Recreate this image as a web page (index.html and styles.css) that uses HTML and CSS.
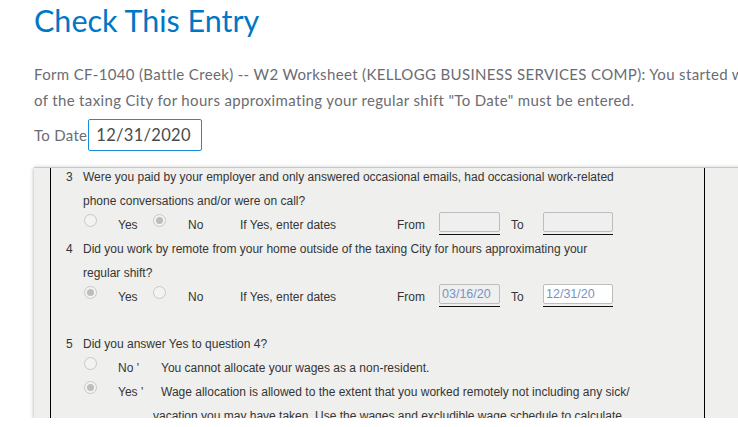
FILE: index.html
```html
<!DOCTYPE html>
<html>
<head>
    <title>Check This Entry</title>
    <link rel="stylesheet" href="styles.css">
</head>
<body>
    <h1 class="title">Check This Entry</h1>

    <p class="message">
        <span class="msg-line">Form CF-1040 (Battle Creek) -- W2 Worksheet (KELLOGG BUSINESS SERVICES COMP): You started working remotely from your home outside</span>
        <span class="msg-line">of the taxing City for hours approximating your regular shift "To Date" must be entered.</span>
    </p>

    <div class="to-date">
        <label for="toDate">To Date</label>
        <input type="text" id="toDate" class="date-input" value="12/31/2020">
    </div>

    <div class="viewer">
        <div class="sheet">
            <div class="q-line"><span class="q-num">3</span>Were you paid by your employer and only answered occasional emails, had occasional work-related</div>
            <div class="q-line q-cont">phone conversations and/or were on call?</div>
            <div class="answer-row">
                <span class="choice"><span class="radio"></span><span class="choice-label">Yes</span></span>
                <span class="choice choice-no"><span class="radio checked"></span><span class="choice-label">No</span></span>
                <span class="dates-hint">If Yes, enter dates</span>
                <span class="from-label">From</span>
                <span class="field field-from"><span class="box"></span></span>
                <span class="to-label">To</span>
                <span class="field field-to"><span class="box"></span></span>
            </div>

            <div class="q-line"><span class="q-num">4</span>Did you work by remote from your home outside of the taxing City for hours approximating your</div>
            <div class="q-line q-cont">regular shift?</div>
            <div class="answer-row">
                <span class="choice"><span class="radio checked"></span><span class="choice-label">Yes</span></span>
                <span class="choice choice-no"><span class="radio"></span><span class="choice-label">No</span></span>
                <span class="dates-hint">If Yes, enter dates</span>
                <span class="from-label">From</span>
                <span class="field field-from"><span class="box">03/16/20</span></span>
                <span class="to-label">To</span>
                <span class="field field-to"><span class="box box-white">12/31/20</span></span>
            </div>

            <div class="q-line q-gap"><span class="q-num">5</span>Did you answer Yes to question 4?</div>
            <div class="answer-row">
                <span class="radio"></span>
                <span class="opt-label">No '</span>
                <span class="opt-text">You cannot allocate your wages as a non-resident.</span>
            </div>
            <div class="answer-row">
                <span class="radio checked"></span>
                <span class="opt-label">Yes '</span>
                <span class="opt-text">Wage allocation is allowed to the extent that you worked remotely not including any sick/</span>
            </div>
            <div class="q-line opt-cont">vacation you may have taken. Use the wages and excludible wage schedule to calculate</div>
        </div>
    </div>
</body>
</html>
```

FILE: styles.css
```css
body {
    margin: 0;
    padding: 0 0 0 34px;
    font-family: Lato, "Open Sans", sans-serif;
    background: #fff;
    overflow: hidden;
}
.title {
    margin: 0;
    padding-top: 2px;
    font-size: 30.5px;
    font-weight: 400;
    line-height: 36px;
    color: #0077c5;
}
.message {
    margin: 23px 0 0;
    font-size: 15px;
    line-height: 26px;
    letter-spacing: 0.35px;
    color: #6b6c72;
    white-space: nowrap;
}
.msg-line {
    display: block;
}
.to-date {
    display: flex;
    align-items: center;
    margin-top: 6px;
    font-size: 15px;
    letter-spacing: 0.3px;
    color: #6b6c72;
}
.date-input {
    width: 114px;
    height: 32px;
    box-sizing: border-box;
    margin: 0 0 0 1px;
    padding: 0 7px;
    border: 1px solid #1a8cd8;
    border-radius: 2px;
    font-family: Lato, "Open Sans", sans-serif;
    font-size: 16.5px;
    letter-spacing: 0.3px;
    color: #4a4a4a;
    outline: none;
}
.viewer {
    margin-top: 16px;
    width: 697px;
    height: 250px;
    overflow: hidden;
    background: #efefed;
    border-top: 1px solid #c9c9c9;
    border-right: 2px solid #d6d6d6;
    box-shadow: 0 1px 4px rgba(0, 0, 0, 0.35);
    padding-left: 16px;
}
.sheet {
    width: 638px;
    margin-top: -3px;
    padding-left: 15px;
    border-left: 1px solid #000;
    border-right: 1px solid #000;
    font-family: "Liberation Sans", Arial, sans-serif;
    font-size: 12px;
    color: #353535;
}
.q-line {
    height: 24px;
    line-height: 24px;
    white-space: nowrap;
}
.q-num {
    display: inline-block;
    width: 17px;
}
.q-cont {
    padding-left: 17px;
}
.q-gap {
    margin-top: 23px;
}
.opt-cont {
    padding-left: 87px;
}
.answer-row {
    display: flex;
    height: 24px;
    line-height: 24px;
    padding-left: 18px;
    white-space: nowrap;
}
.radio {
    flex: none;
    width: 11px;
    height: 11px;
    margin-top: 1px;
    border: 1px solid #c8c8c8;
    border-radius: 50%;
    background: #f3f3f3;
    position: relative;
}
.radio.checked::after {
    content: "";
    position: absolute;
    left: 2px;
    top: 2px;
    width: 7px;
    height: 7px;
    border-radius: 50%;
    background: #bdbdbd;
}
.choice {
    display: flex;
    width: 69px;
}
.choice-no {
    width: 87px;
}
.choice-label {
    margin-left: 21px;
}
.choice-no .choice-label {
    margin-left: 22px;
}
.dates-hint {
    width: 157px;
}
.from-label {
    width: 42px;
}
.to-label {
    width: 32px;
    padding-left: 11px;
}
.field {
    display: flex;
    height: 22px;
    margin-top: -1px;
    border-bottom: 1px solid #111;
}
.field-from {
    width: 61px;
}
.field-to {
    width: 70px;
}
.box {
    width: 58px;
    height: 18px;
    line-height: 18px;
    padding-left: 2px;
    border: 1px solid #bdbdbd;
    border-radius: 2px;
    background: #efefef;
    color: #7694c6;
    font-size: 12.5px;
}
.field-to .box {
    width: 66px;
}
.box-white {
    background: #fff;
}
.opt-label {
    width: 43px;
    margin-left: 21px;
}
```
